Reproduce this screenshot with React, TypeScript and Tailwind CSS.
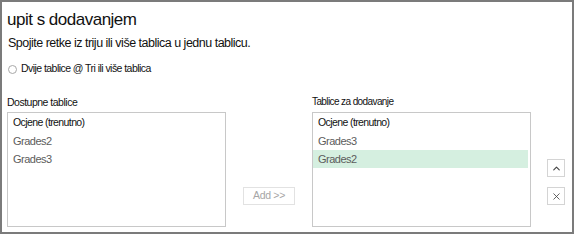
import { ChevronUp, X } from "lucide-react";

const available = ["Ocjene (trenutno)", "Grades2", "Grades3"];
const toAdd = ["Ocjene (trenutno)", "Grades3", "Grades2"];

function TableList({ items, selected }: { items: string[]; selected?: number }) {
  return (
    <div className="h-[115px] w-[219px] border border-[#c8c8c8] bg-white pt-px">
      {items.map((name, i) => (
        <div
          key={name}
          className={`mr-[2px] flex h-[18px] items-center pl-[5px] ${
            i === selected ? "bg-[#d5efe0]" : ""
          } ${
            i === 0
              ? "text-[10.5px] tracking-[-0.6px] text-[#111]"
              : "text-[11px] tracking-[-0.5px] text-[#5c5c5c]"
          }`}
        >
          {name}
        </div>
      ))}
    </div>
  );
}

export default function App() {
  return (
    <div className="h-[234px] w-[574px] border-2 border-[#7b7b7b] bg-white pl-[5px] pt-[7px] font-['Liberation_Sans',Arial,sans-serif] text-black">
      <div className="text-[17px] leading-[22px] tracking-[-0.5px] text-[#111]">upit s dodavanjem</div>
      <div className="mt-[4px] pl-px text-[12.5px] leading-[16px] tracking-[-0.5px] text-[#111]">
        Spojite retke iz triju ili više tablica u jednu tablicu.
      </div>
      <div className="mt-[11px] flex h-[14px] items-center gap-[4px] pl-px text-[10.5px] tracking-[-0.55px] text-[#111]">
        <span className="h-[9px] w-[9px] rounded-full border border-[#a8a8a8] bg-white" />
        <span>Dvije tablice @ Tri ili više tablica</span>
      </div>

      <div className="mt-[19px] flex items-start">
        <div className="flex flex-col">
          <div className="h-[14px] text-[10.5px] leading-[14px] tracking-[-0.5px] text-[#111]">Dostupne tablice</div>
          <div className="mt-[3px]">
            <TableList items={available} />
          </div>
        </div>

        <div className="ml-[17px] mt-[92px]">
          <button
            type="button"
            className="flex h-[18px] w-[52px] items-center justify-center border border-[#e2e2e2] bg-white text-[10.5px] tracking-[-0.3px] text-[#a6a6a6]"
          >
            Add &gt;&gt;
          </button>
        </div>

        <div className="ml-[17px] flex flex-col">
          <div className="h-[14px] text-[10px] leading-[14px] tracking-[-0.6px] text-[#111]">Tablice za dodavanje</div>
          <div className="mt-[3px]">
            <TableList items={toAdd} selected={2} />
          </div>
        </div>

        <div className="ml-[16px] mt-[64px] flex flex-col gap-[10px]">
          <button
            type="button"
            className="flex h-[18px] w-[18px] items-center justify-center border border-[#d4d4d4] bg-white text-[#444]"
          >
            <ChevronUp size={11} strokeWidth={2.5} />
          </button>
          <button
            type="button"
            className="flex h-[18px] w-[18px] items-center justify-center border border-[#d4d4d4] bg-white text-[#444]"
          >
            <X size={11} strokeWidth={1.8} />
          </button>
        </div>
      </div>
    </div>
  );
}
